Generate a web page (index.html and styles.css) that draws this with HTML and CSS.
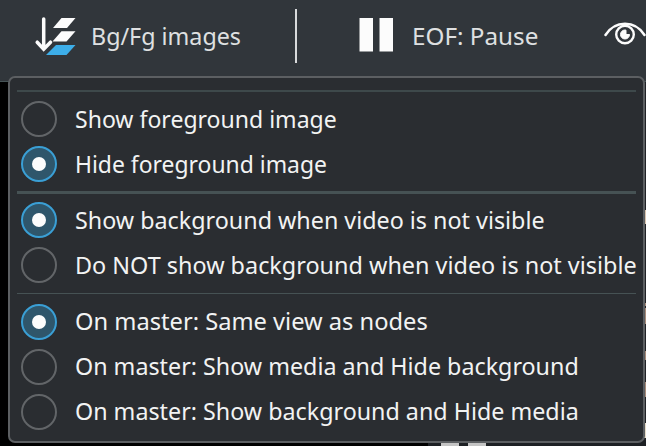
FILE: index.html
```html
<!DOCTYPE html>
<html lang="en">
<head>
<meta charset="utf-8">
<title>Player</title>
<link rel="stylesheet" href="styles.css">
</head>
<body>
<div class="window">
  <header class="toolbar">
    <button class="tool images">
      <svg width="42" height="42" viewBox="0 0 42 42">
        <path d="M9.7 5V35M3.2 28.2L9.7 35.2L16.5 28.2" fill="none" stroke="#fcfcfc" stroke-width="3.5" stroke-linecap="round"/>
        <path d="M27.5 4H41.5L33 14H19Z" fill="#fcfcfc"/>
        <path d="M27.5 17.3H41.5L32.5 27.5H18.5Z" fill="#fcfcfc"/>
        <path d="M22 31H41.5L32.5 41H12Z" fill="#3daee9"/>
      </svg>
      <span class="label l1">Bg/Fg images</span>
    </button>
    <span class="divider"></span>
    <button class="tool eof">
      <svg width="36" height="36" viewBox="0 0 36 36"><path d="M0.5 1H14V34.5H.5ZM20.5 1H34V34.5H20.5Z" fill="#fcfcfc"/></svg>
      <span class="label l2">EOF: Pause</span>
    </button>
    <button class="tool view">
      <svg width="42" height="26" viewBox="0 0 42 26">
        <path d="M1.5 13C11 -2 31 -2 40.5 13" fill="none" stroke="#fcfcfc" stroke-width="2.5" stroke-linecap="round"/>
        <circle cx="21" cy="12.5" r="8.8" fill="none" stroke="#fcfcfc" stroke-width="2.4"/>
        <path d="M21 8A4.5 4.5 0 1 0 25.5 12.5H22V8.2Z" fill="#fcfcfc" stroke="#fcfcfc"/>
      </svg>
    </button>
  </header>
  <div class="side"><i class="n1"></i><i class="n2"></i><i class="n3"></i><i class="n4"></i><i class="n5"></i><i class="n6"></i></div>
  <div class="controls"><i></i><i></i></div>
  <div class="menu">
    <hr class="first">
    <div class="item"><span class="radio"></span><span class="text t1">Show foreground image</span></div>
    <div class="item"><span class="radio on"></span><span class="text t2">Hide foreground image</span></div>
    <hr class="thick">
    <div class="item"><span class="radio on"></span><span class="text t3">Show background when video is not visible</span></div>
    <div class="item"><span class="radio"></span><span class="text t4">Do NOT show background when video is not visible</span></div>
    <hr class="thin">
    <div class="item"><span class="radio on"></span><span class="text t5">On master: Same view as nodes</span></div>
    <div class="item"><span class="radio"></span><span class="text t6">On master: Show media and Hide background</span></div>
    <div class="item"><span class="radio"></span><span class="text t6">On master: Show background and Hide media</span></div>
  </div>
</div>
</body>
</html>
```
FILE: styles.css
```css
* { box-sizing: border-box; }
body { margin: 0; background: #000; font-family: "Noto Sans", "Open Sans", sans-serif; }
.window { position: relative; width: 646px; height: 446px; overflow: hidden; background: #000; }
.toolbar { display: flex; width: 646px; height: 82px; background: #31363b; border-bottom: 1px solid #465456; }
.tool { display: flex; flex: none; padding: 0; border: 0; background: none; color: #dfe0e1; font: 24px/32px "Noto Sans", sans-serif; }
.images { width: 295px; padding: 14px 0 0 34px; }
.images .label { margin: 6px 0 0 15px; }
.divider { flex: none; width: 2px; height: 54px; margin-top: 9px; background: #d8dadb; }
.eof { width: 307px; padding: 17px 0 0 62px; }
.eof .label { margin: 3px 0 0 17px; }
.view { padding-top: 22px; }
.label, .text { flex: none; height: 32px; white-space: nowrap; transform-origin: 0 50%; }
.l1 { transform: scaleX(.97); }
.l2 { transform: scaleX(1.01); }
.t1 { transform: scaleX(.96); }
.t2 { transform: scaleX(.954); }
.t3 { transform: scaleX(.971); }
.t4 { transform: scaleX(.975); }
.t5 { transform: scaleX(.986); }
.t6 { transform: scaleX(.97); }
.menu { position: absolute; left: 8px; top: 76px; width: 637px; height: 367px; padding: 12px 7px 0; border: 2px solid #5c5f62; border-radius: 7px; background: #2a2d31; }
hr { height: 2px; margin: 0; border: 0; background: #3e494b; }
hr.first { margin-bottom: 4px; }
hr.thick { height: 3px; margin: 5px 0 3px; background: #465254; }
hr.thin { height: 1px; margin: 6px 0 5px; background: #465254; }
.item { display: flex; align-items: center; height: 45px; padding-left: 4px; color: #f2f3f3; font-size: 24px; line-height: 32px; }
.radio { flex: none; display: flex; width: 36px; height: 36px; margin-right: 18px; border: 2px solid #626568; border-radius: 50%; }
.radio.on { border-color: #3a9fd5; background: #2f566b; }
.radio.on::after { content: ""; width: 14px; height: 14px; margin: auto; border-radius: 50%; background: #fcfcfc; }
.t5, .t6 { margin-top: -1px; }
.side { position: absolute; left: 642px; top: 82px; width: 4px; height: 364px; background: #202226; }
.side i { position: absolute; left: 2px; width: 2px; background: #a78b7a; }
.side .n1 { top: 128px; height: 14px; background: #d8c3ae; }
.side .n2 { top: 226px; height: 16px; }
.side .n3 { top: 269px; height: 9px; }
.side .n4 { top: 300px; height: 15px; }
.side .n5 { top: 341px; height: 15px; background: #e6dcc9; }
.side .n6 { top: 221px; height: 3px; }
.controls { position: absolute; left: 428px; top: 440px; width: 218px; height: 6px; display: flex; gap: 9px; padding-left: 13px; background: #1d2024; }
.controls i { width: 18px; background: #c4c4c4; }
```
